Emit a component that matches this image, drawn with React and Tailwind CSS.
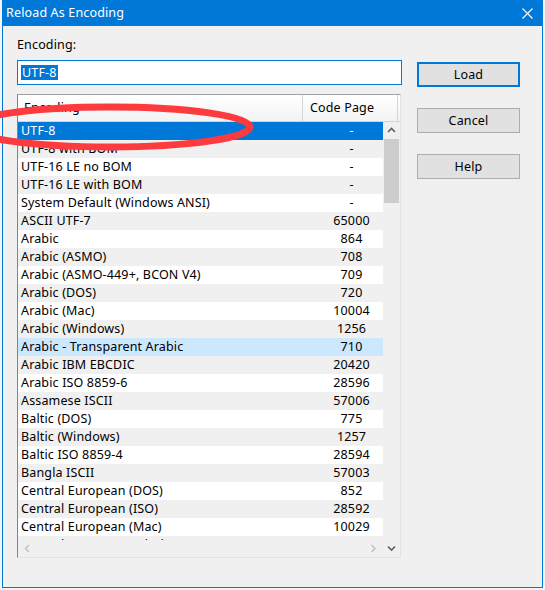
import React from 'react'

const rows = [
  ['UTF-8', '-'],
  ['UTF-8 with BOM', '-'],
  ['UTF-16 LE no BOM', '-'],
  ['UTF-16 LE with BOM', '-'],
  ['System Default (Windows ANSI)', '-'],
  ['ASCII UTF-7', '65000'],
  ['Arabic', '864'],
  ['Arabic (ASMO)', '708'],
  ['Arabic (ASMO-449+, BCON V4)', '709'],
  ['Arabic (DOS)', '720'],
  ['Arabic (Mac)', '10004'],
  ['Arabic (Windows)', '1256'],
  ['Arabic - Transparent Arabic', '710'],
  ['Arabic IBM EBCDIC', '20420'],
  ['Arabic ISO 8859-6', '28596'],
  ['Assamese ISCII', '57006'],
  ['Baltic (DOS)', '775'],
  ['Baltic (Windows)', '1257'],
  ['Baltic ISO 8859-4', '28594'],
  ['Bangla ISCII', '57003'],
  ['Central European (DOS)', '852'],
  ['Central European (ISO)', '28592'],
  ['Central European (Mac)', '10029'],
  ['Central European (Windows)', '1250'],
]

const Chevron = ({ dir, color = '#606060' }) => {
  const pts = {
    up: '1,5 4.5,1.5 8,5',
    down: '1,1.5 4.5,5 8,1.5',
    left: '5,1 1.5,4.5 5,8',
    right: '1.5,1 5,4.5 1.5,8',
  }[dir]
  const w = dir === 'up' || dir === 'down' ? 9 : 7
  const h = dir === 'up' || dir === 'down' ? 7 : 9
  return (
    <svg width={w} height={h} viewBox={`0 0 ${w} ${h}`}>
      <polyline points={pts} fill="none" stroke={color} strokeWidth="1.6" />
    </svg>
  )
}

const Button = ({ children, primary }) => (
  <div
    className={`w-[103px] h-[25px] flex items-center justify-center bg-[#e1e1e1] text-black ${
      primary ? 'border-2 border-[#0078d7]' : 'border border-[#adadad]'
    }`}
  >
    {children}
  </div>
)

export default function App() {
  return (
    <div
      className="relative w-[545px] h-[590px] bg-[#f4f4f4] overflow-hidden text-[12.5px] leading-[16px] tracking-[0.15px]"
      style={{ fontFamily: '"Noto Sans", "Liberation Sans", sans-serif' }}
    >
      {/* window */}
      <div className="ml-[2px] w-[541px] h-[588px] border-x border-b border-[#0078d7] bg-[#f0f0f0] flex flex-col">
        <div className="h-[26px] bg-[#0078d7] flex items-center justify-between pl-[3px] pr-[9px] text-white">
          <span>Reload As Encoding</span>
          <svg width="11" height="11" viewBox="0 0 11 11">
            <path d="M0.5 0.5 L10.5 10.5 M10.5 0.5 L0.5 10.5" stroke="white" strokeWidth="1.1" />
          </svg>
        </div>

        <div className="flex pl-[14px]">
          <div className="flex flex-col w-[385px] pt-[11px]">
            <div className="h-[16px] text-black">Encoding:</div>
            <div className="mt-[7px] h-[25px] w-[385px] border border-[#0078d7] bg-white flex items-center pl-[3px]">
              <span className="bg-[#0078d7] text-white px-[1px] h-[15px] flex items-center">UTF-8</span>
            </div>

            {/* list */}
            <div className="mt-[9px] w-[384px] h-[464px] border border-t-[#a0a0a0] border-l-[#828282] border-r-[#e3e3e3] border-b-[#e3e3e3] bg-white flex flex-col">
              <div className="h-[27px] flex bg-gradient-to-b from-white to-[#f3f3f3] border-b border-[#d5d5d5] text-black">
                <div className="w-[285px] pl-[6px] flex items-center border-r border-[#d5d5d5]">Encoding</div>
                <div className="w-[95px] pl-[7px] flex items-center border-r border-[#d5d5d5]">Code Page</div>
              </div>
              <div className="flex h-[435px]">
                <div className="w-[365px] flex flex-col">
                  <div className="h-[418px] overflow-hidden">
                    {rows.map(([name, code], i) => {
                      const bg =
                        i === 0
                          ? 'bg-[#0078d7] text-white'
                          : i === 12
                          ? 'bg-[#cce8ff] text-black'
                          : i % 2 === 1
                          ? 'bg-[#f0f0f0] text-black'
                          : 'bg-white text-black'
                      return (
                        <div key={name} className={`h-[18px] flex items-center whitespace-nowrap ${bg}`}>
                          <div className="w-[285px] shrink-0 pl-[3px]">{name}</div>
                          <div className="w-[97px] shrink-0 text-center">{code}</div>
                        </div>
                      )
                    })}
                  </div>
                  <div className="h-[17px] bg-[#f0f0f0] flex items-center justify-between px-[6px]">
                    <Chevron dir="left" color="#c2c2c2" />
                    <Chevron dir="right" color="#c2c2c2" />
                  </div>
                </div>
                <div className="w-[17px] bg-[#f0f0f0] flex flex-col items-center">
                  <div className="h-[17px] flex items-center justify-center">
                    <Chevron dir="up" />
                  </div>
                  <div className="w-[15px] h-[64px] bg-[#cdcdcd]" />
                  <div className="flex-1" />
                  <div className="h-[17px] flex items-center justify-center">
                    <Chevron dir="down" />
                  </div>
                </div>
              </div>
            </div>
          </div>

          <div className="ml-[15px] pt-[36px] flex flex-col gap-[21px]">
            <Button primary>Load</Button>
            <Button>Cancel</Button>
            <Button>Help</Button>
          </div>
        </div>
      </div>

      {/* red annotation ellipse */}
      <svg className="absolute left-0 top-0 pointer-events-none" width="545" height="590">
        <ellipse cx="110" cy="127" rx="140" ry="20" fill="none" stroke="#fd3b3e" strokeWidth="7" />
      </svg>
    </div>
  )
}
